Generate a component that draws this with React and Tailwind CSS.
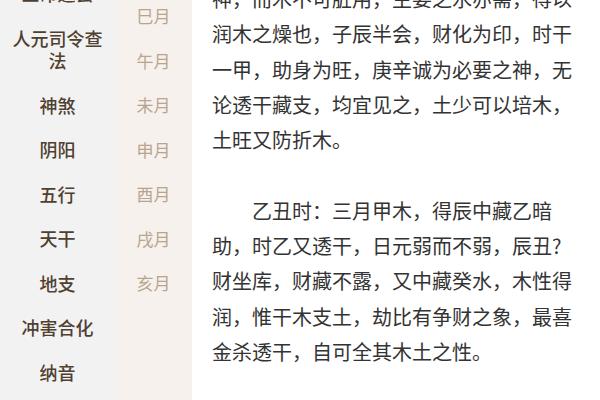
import React from 'react';

const cats = [
  ['三命通会'],
  ['人元司令查', '法'],
  ['神煞'],
  ['阴阳'],
  ['五行'],
  ['天干'],
  ['地支'],
  ['冲害合化'],
  ['纳音'],
];

const months = ['巳月', '午月', '未月', '申月', '酉月', '戌月', '亥月'];

const para1 = [
  '神，而木不可脏用，主要之水亦需，得以',
  '润木之燥也，子辰半会，财化为印，时干',
  '一甲，助身为旺，庚辛诚为必要之神，无',
  '论透干藏支，均宜见之，土少可以培木，',
  '土旺又防折木。',
];

const para2 = [
  '乙丑时：三月甲木，得辰中藏乙暗',
  '助，时乙又透干，日元弱而不弱，辰丑?',
  '财坐库，财藏不露，又中藏癸水，木性得',
  '润，惟干木支土，劫比有争财之象，最喜',
  '金杀透干，自可全其木土之性。',
];

export default function App() {
  return (
    <div
      className="w-[600px] h-[400px] overflow-hidden flex bg-white"
      style={{ fontFamily: '"Noto Sans CJK SC", "Noto Sans", sans-serif' }}
    >
      {/* 一级分类 */}
      <div className="w-[115px] shrink-0 bg-[#f2f2f2]">
        <div className="-mt-[29px]">
          {cats.map((c, i) => (
            <div key={i} className="py-[11px] text-center text-[18px] leading-[22.5px] text-[#4f4030] font-medium">
              {c.map((l, j) => (
                <div key={j}>{l}</div>
              ))}
            </div>
          ))}
        </div>
      </div>

      {/* 月份 */}
      <div className="w-[77px] shrink-0 bg-[#f6f1ed]">
        <div className="-mt-[6px]">
          {months.map((m) => (
            <div key={m} className="py-[11px] text-center text-[17px] leading-[22.5px] text-[#b9a58e]">
              {m}
            </div>
          ))}
        </div>
      </div>

      {/* 正文 */}
      <div className="flex-1 pl-5 text-[20px] leading-[35.3px] text-[#333333]">
        <div className="-mt-[19px]">
          {para1.map((l, i) => (
            <div key={i} className="whitespace-nowrap">{l}</div>
          ))}
          <div className="h-[35.3px]"></div>
          {para2.map((l, i) => (
            <div key={i} className={'whitespace-nowrap ' + (i === 0 ? 'pl-[40px]' : '')}>{l}</div>
          ))}
        </div>
      </div>
    </div>
  );
}
